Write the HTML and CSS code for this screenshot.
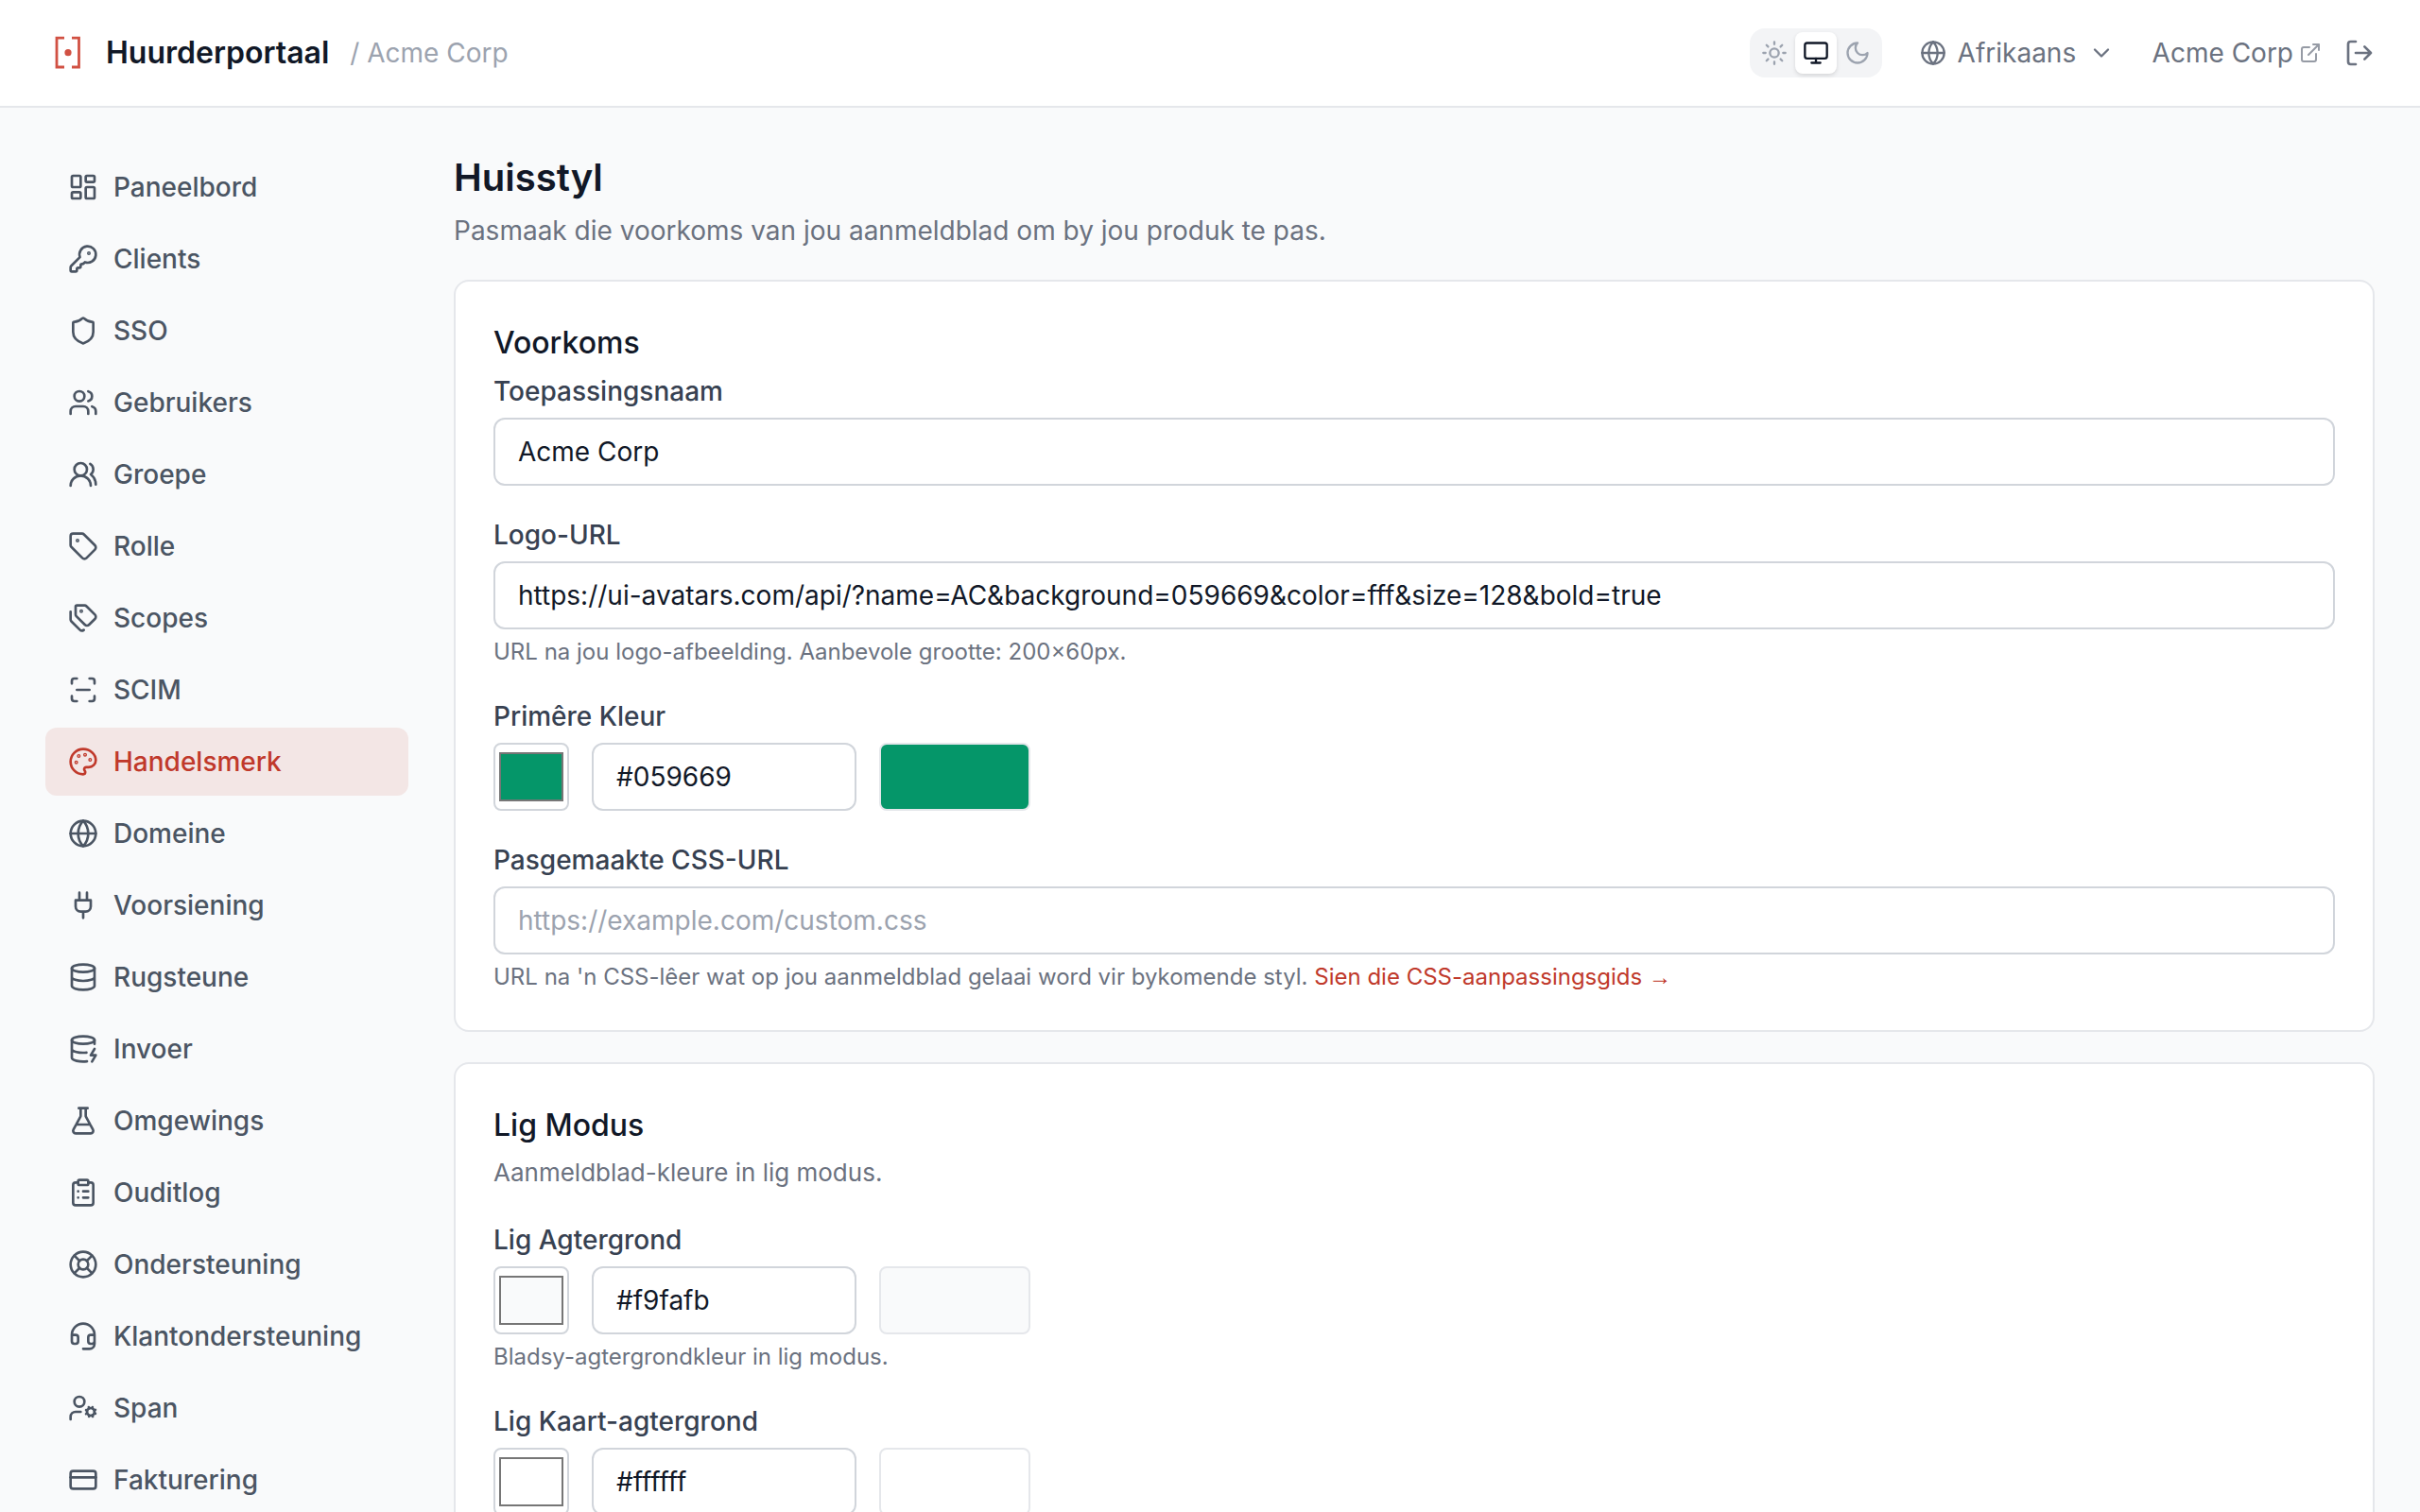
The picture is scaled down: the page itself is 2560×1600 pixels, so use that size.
FILE: index.html
```html
<!DOCTYPE html>
<html lang="af">
<head>
<meta charset="utf-8">
<meta name="viewport" content="width=device-width, initial-scale=1">
<title>Huisstyl – Huurderportaal</title>
<link rel="stylesheet" href="styles.css">
</head>
<body>
<header class="topbar">
  <div class="brand">
    <svg class="logo" viewBox="0 0 48 48" fill="none" stroke="currentColor" stroke-width="2.800" aria-hidden="true"><path d="M20 8.200H12V39H20M28 8.200H35.500V39H28"/><circle cx="24" cy="23.700" r="3.600" fill="currentColor" stroke="none"/></svg>
    <span class="brand-name">Huurderportaal</span>
    <span class="brand-org">/ Acme Corp</span>
  </div>
  <div class="tools">
    <div class="theme" role="group" aria-label="Tema">
      <button type="button" class="theme-btn" aria-label="Lig"><svg class="icon" viewBox="0 0 24 24"><circle cx="12" cy="12" r="4"/><path d="M12 2v2M12 20v2M4.930 4.930l1.410 1.410M17.660 17.660l1.410 1.410M2 12h2M20 12h2M6.340 17.660l-1.410 1.410M19.070 4.930l-1.410 1.410"/></svg></button>
      <button type="button" class="theme-btn is-active" aria-label="Stelsel" aria-pressed="true"><svg class="icon" viewBox="0 0 24 24"><rect width="20" height="14" x="2" y="3" rx="2"/><path d="M8 21h8M12 17v4"/></svg></button>
      <button type="button" class="theme-btn" aria-label="Donker"><svg class="icon" viewBox="0 0 24 24"><path d="M12 3a6 6 0 0 0 9 9 9 9 0 1 1-9-9Z"/></svg></button>
    </div>
    <div class="lang">
      <svg class="icon" viewBox="0 0 24 24" aria-hidden="true"><circle cx="12" cy="12" r="10"/><path d="M12 2a14.500 14.500 0 0 0 0 20 14.500 14.500 0 0 0 0-20M2 12h20"/></svg>
      <select class="lang-select" aria-label="Taal"><option>Afrikaans</option></select>
      <svg class="icon" viewBox="0 0 24 24" aria-hidden="true"><path d="m6 9 6 6 6-6"/></svg>
    </div>
    <div class="account">
      <a class="org-link" href="#">Acme Corp <svg class="icon icon-ext" viewBox="0 0 24 24" aria-hidden="true"><path d="M15 3h6v6M10 14 21 3M18 13v6a2 2 0 0 1-2 2H5a2 2 0 0 1-2-2V8a2 2 0 0 1 2-2h6"/></svg></a>
      <button type="button" class="logout" aria-label="Teken uit"><svg class="icon icon-nav" viewBox="0 0 24 24"><path d="m16 17 5-5-5-5M21 12H9M9 21H5a2 2 0 0 1-2-2V5a2 2 0 0 1 2-2h4"/></svg></button>
    </div>
  </div>
</header>
<div class="shell">
  <nav class="sidebar" aria-label="Hoofnavigasie">
    <a class="nav-item" href="#"><svg class="icon icon-nav" viewBox="0 0 24 24"><rect width="7" height="9" x="3" y="3" rx="1"/><rect width="7" height="5" x="14" y="3" rx="1"/><rect width="7" height="9" x="14" y="12" rx="1"/><rect width="7" height="5" x="3" y="16" rx="1"/></svg>Paneelbord</a>
    <a class="nav-item" href="#"><svg class="icon icon-nav" viewBox="0 0 24 24"><path d="M2.586 17.414A2 2 0 0 0 2 18.828V21a1 1 0 0 0 1 1h3a1 1 0 0 0 1-1v-1a1 1 0 0 1 1-1h1a1 1 0 0 0 1-1v-1a1 1 0 0 1 1-1h.172a2 2 0 0 0 1.414-.586l.814-.814a6.500 6.500 0 1 0-4-4z"/><circle cx="16.500" cy="7.500" r=".5" fill="currentColor"/></svg>Clients</a>
    <a class="nav-item" href="#"><svg class="icon icon-nav" viewBox="0 0 24 24"><path d="M20 13c0 5-3.500 7.500-7.660 8.950a1 1 0 0 1-.67-.01C7.500 20.500 4 18 4 13V6a1 1 0 0 1 1-1c2 0 4.500-1.200 6.240-2.720a1.170 1.170 0 0 1 1.520 0C14.510 3.810 17 5 19 5a1 1 0 0 1 1 1z"/></svg>SSO</a>
    <a class="nav-item" href="#"><svg class="icon icon-nav" viewBox="0 0 24 24"><path d="M16 21v-2a4 4 0 0 0-4-4H6a4 4 0 0 0-4 4v2"/><circle cx="9" cy="7" r="4"/><path d="M22 21v-2a4 4 0 0 0-3-3.870M16 3.130a4 4 0 0 1 0 7.750"/></svg>Gebruikers</a>
    <a class="nav-item" href="#"><svg class="icon icon-nav" viewBox="0 0 24 24"><path d="M18 21a8 8 0 0 0-16 0"/><circle cx="10" cy="8" r="5"/><path d="M22 20c0-3.370-2-6.500-4-8a5 5 0 0 0-.45-8.300"/></svg>Groepe</a>
    <a class="nav-item" href="#"><svg class="icon icon-nav" viewBox="0 0 24 24"><path d="M12.586 2.586A2 2 0 0 0 11.172 2H4a2 2 0 0 0-2 2v7.172a2 2 0 0 0 .586 1.414l8.704 8.704a2.426 2.426 0 0 0 3.420 0l6.580-6.580a2.426 2.426 0 0 0 0-3.420z"/><circle cx="7.500" cy="7.500" r=".5" fill="currentColor"/></svg>Rolle</a>
    <a class="nav-item" href="#"><svg class="icon icon-nav" viewBox="0 0 24 24"><path d="M13.172 2a2 2 0 0 1 1.414.586l6.710 6.710a2.400 2.400 0 0 1 0 3.408l-4.592 4.592a2.400 2.400 0 0 1-3.408 0l-6.710-6.710A2 2 0 0 1 6 9.172V3a1 1 0 0 1 1-1zM2 7v6.172a2 2 0 0 0 .586 1.414l6.710 6.710a2.400 2.400 0 0 0 3.191.193"/><circle cx="10.500" cy="6.500" r=".5" fill="currentColor"/></svg>Scopes</a>
    <a class="nav-item" href="#"><svg class="icon icon-nav" viewBox="0 0 24 24"><path d="M3 7V5a2 2 0 0 1 2-2h2M17 3h2a2 2 0 0 1 2 2v2M21 17v2a2 2 0 0 1-2 2h-2M7 21H5a2 2 0 0 1-2-2v-2M7 12h10"/></svg>SCIM</a>
    <a class="nav-item is-active" href="#" aria-current="page"><svg class="icon icon-nav" viewBox="0 0 24 24"><path d="M12 2C6.500 2 2 6.500 2 12s4.500 10 10 10c.926 0 1.648-.746 1.648-1.688 0-.437-.18-.835-.437-1.125-.29-.289-.438-.652-.438-1.125a1.640 1.640 0 0 1 1.668-1.668h1.996c3.051 0 5.555-2.503 5.555-5.554C21.965 6.012 17.461 2 12 2z"/><circle cx="13.500" cy="6.500" r=".5"/><circle cx="17.500" cy="10.500" r=".5"/><circle cx="8.500" cy="7.500" r=".5"/><circle cx="6.500" cy="12.500" r=".5"/></svg>Handelsmerk</a>
    <a class="nav-item" href="#"><svg class="icon icon-nav" viewBox="0 0 24 24"><circle cx="12" cy="12" r="10"/><path d="M12 2a14.500 14.500 0 0 0 0 20 14.500 14.500 0 0 0 0-20M2 12h20"/></svg>Domeine</a>
    <a class="nav-item" href="#"><svg class="icon icon-nav" viewBox="0 0 24 24"><path d="M12 22v-5M9 8V2M15 8V2M18 8v5a4 4 0 0 1-4 4h-4a4 4 0 0 1-4-4V8Z"/></svg>Voorsiening</a>
    <a class="nav-item" href="#"><svg class="icon icon-nav" viewBox="0 0 24 24"><ellipse cx="12" cy="5" rx="9" ry="3"/><path d="M3 5v14a9 3 0 0 0 18 0V5M3 12a9 3 0 0 0 18 0"/></svg>Rugsteune</a>
    <a class="nav-item" href="#"><svg class="icon icon-nav" viewBox="0 0 24 24"><ellipse cx="12" cy="5" rx="9" ry="3"/><path d="M3 5v14a9 3 0 0 0 12 2.840M21 5v3M21 12l-3 5h4l-3 5M3 12a9 3 0 0 0 11.590 2.870"/></svg>Invoer</a>
    <a class="nav-item" href="#"><svg class="icon icon-nav" viewBox="0 0 24 24"><path d="M14 2v6a2 2 0 0 0 .245.960l5.510 10.080A2 2 0 0 1 18 22H6a2 2 0 0 1-1.755-2.960l5.510-10.080A2 2 0 0 0 10 8V2M6.453 15h11.094M8.500 2h7"/></svg>Omgewings</a>
    <a class="nav-item" href="#"><svg class="icon icon-nav" viewBox="0 0 24 24"><rect width="8" height="4" x="8" y="2" rx="1"/><path d="M16 4h2a2 2 0 0 1 2 2v14a2 2 0 0 1-2 2H6a2 2 0 0 1-2-2V6a2 2 0 0 1 2-2h2M12 11h4M12 16h4M8 11h.01M8 16h.01"/></svg>Ouditlog</a>
    <a class="nav-item" href="#"><svg class="icon icon-nav" viewBox="0 0 24 24"><circle cx="12" cy="12" r="10"/><path d="m4.930 4.930 4.240 4.240M14.830 9.170l4.240-4.240M14.830 14.830l4.240 4.240M9.170 14.830l-4.240 4.240"/><circle cx="12" cy="12" r="4"/></svg>Ondersteuning</a>
    <a class="nav-item" href="#"><svg class="icon icon-nav" viewBox="0 0 24 24"><path d="M3 11h3a2 2 0 0 1 2 2v3a2 2 0 0 1-2 2H5a2 2 0 0 1-2-2v-5Zm0 0a9 9 0 1 1 18 0m0 0v5a2 2 0 0 1-2 2h-1a2 2 0 0 1-2-2v-3a2 2 0 0 1 2-2h3ZM21 16v2a4 4 0 0 1-4 4h-5"/></svg>Klantondersteuning</a>
    <a class="nav-item" href="#"><svg class="icon icon-nav" viewBox="0 0 24 24"><circle cx="18" cy="15" r="3"/><circle cx="9" cy="7" r="4"/><path d="M10 15H6a4 4 0 0 0-4 4v2M21.700 16.400l-.9-.3M15.200 13.900l-.9-.3M16.600 18.700l.3-.9M19.100 12.200l.3-.9M19.600 18.700l-.4-1M16.800 12.300l-.4-1M14.300 16.600l1-.4M20.700 13.800l1-.4"/></svg>Span</a>
    <a class="nav-item" href="#"><svg class="icon icon-nav" viewBox="0 0 24 24"><rect width="20" height="14" x="2" y="5" rx="2"/><path d="M2 10h20"/></svg>Fakturering</a>
  </nav>
  <main class="content">
    <div class="page-head">
      <h1 class="page-title">Huisstyl</h1>
      <p class="page-sub">Pasmaak die voorkoms van jou aanmeldblad om by jou produk te pas.</p>
    </div>
    <section class="card">
      <h2 class="card-title">Voorkoms</h2>
      <div class="fields">
        <div class="field">
          <label class="label" for="app-name">Toepassingsnaam</label>
          <input class="input" id="app-name" type="text" value="Acme Corp">
        </div>
        <div class="field">
          <label class="label" for="logo-url">Logo-URL</label>
          <input class="input" id="logo-url" type="text" value="https://ui-avatars.com/api/?name=AC&amp;background=059669&amp;color=fff&amp;size=128&amp;bold=true">
          <p class="help">URL na jou logo-afbeelding. Aanbevole grootte: 200×60px.</p>
        </div>
        <div class="field">
          <label class="label" for="primary">Primêre Kleur</label>
          <div class="color-row">
            <input class="picker" type="color" value="#059669" aria-label="Kies primêre kleur">
            <input class="input input-hex" id="primary" type="text" value="#059669">
            <div class="preview" style="background-color:#059669"></div>
          </div>
        </div>
        <div class="field">
          <label class="label" for="css-url">Pasgemaakte CSS-URL</label>
          <input class="input" id="css-url" type="text" placeholder="https://example.com/custom.css">
          <p class="help">URL na 'n CSS-lêer wat op jou aanmeldblad gelaai word vir bykomende styl. <a class="help-link" href="#">Sien die CSS-aanpassingsgids <span class="arrow">→</span></a></p>
        </div>
      </div>
    </section>
    <section class="card">
      <h2 class="card-title">Lig Modus</h2>
      <p class="card-sub">Aanmeldblad-kleure in lig modus.</p>
      <div class="fields">
        <div class="field">
          <label class="label" for="light-bg">Lig Agtergrond</label>
          <div class="color-row">
            <input class="picker" type="color" value="#f9fafb" aria-label="Kies lig agtergrond">
            <input class="input input-hex" id="light-bg" type="text" value="#f9fafb">
            <div class="preview" style="background-color:#f9fafb"></div>
          </div>
          <p class="help">Bladsy-agtergrondkleur in lig modus.</p>
        </div>
        <div class="field">
          <label class="label" for="light-card">Lig Kaart-agtergrond</label>
          <div class="color-row">
            <input class="picker" type="color" value="#ffffff" aria-label="Kies lig kaart-agtergrond">
            <input class="input input-hex" id="light-card" type="text" value="#ffffff">
            <div class="preview" style="background-color:#ffffff"></div>
          </div>
        </div>
      </div>
    </section>
  </main>
</div>
</body>
</html>
```
FILE: styles.css
```css
:root {
  --accent: #c0392b;
  --logo: #d15143;
  --ink: #111827;
  --label: #374151;
  --nav: #4b5563;
  --muted: #6b7280;
  --faint: #9ca3af;
  --line: #e5e7eb;
  --field-line: #d1d5db;
  --bg: #f9fafb;
}

* { box-sizing: border-box; }

body {
  margin: 0;
  background: var(--bg);
  color: var(--ink);
  font-family: Inter, "Liberation Sans", sans-serif;
  font-size: 28px;
  line-height: 40px;
}

h1, h2, p { margin: 0; }
a { color: inherit; text-decoration: none; }
button, input, select { font: inherit; color: inherit; }
button { border: 0; padding: 0; background: none; cursor: pointer; }

.icon {
  display: block;
  flex: none;
  width: 28px;
  height: 28px;
  fill: none;
  stroke: currentColor;
  stroke-width: 2;
  stroke-linecap: round;
  stroke-linejoin: round;
}
.icon-nav { width: 32px; height: 32px; }
.icon-ext { width: 24px; height: 24px; opacity: .7; }

.topbar {
  display: flex;
  align-items: center;
  justify-content: space-between;
  height: 114px;
  padding: 0 48px;
  background: #fff;
  border-bottom: 2px solid var(--line);
}
.brand, .tools, .account, .org-link, .lang { display: flex; align-items: center; }
.logo { width: 48px; height: 48px; margin-right: 16px; color: var(--logo); }
.brand-name { margin-right: 22px; font-size: 32px; font-weight: 600; }
.brand-org { color: var(--faint); }

.tools { gap: 40px; color: var(--muted); }
.theme { display: flex; padding: 4px; border-radius: 16px; background: #f3f4f6; }
.theme-btn {
  display: grid;
  place-items: center;
  width: 44px;
  height: 44px;
  border-radius: 8px;
  color: var(--faint);
}
.theme-btn.is-active {
  background: #fff;
  color: var(--ink);
  box-shadow: 0 2px 4px rgba(0, 0, 0, .12);
}
.lang { gap: 12px; }
.lang-select {
  appearance: none;
  border: 0;
  padding: 0;
  background: none;
}
.account { gap: 24px; }
.org-link { gap: 6px; }

.shell {
  display: grid;
  grid-template-columns: 384px minmax(0, 1fr);
  gap: 48px;
  padding: 48px;
}
.sidebar { display: flex; flex-direction: column; gap: 4px; }
.nav-item {
  display: flex;
  align-items: center;
  gap: 16px;
  padding: 16px 24px;
  border-radius: 12px;
  color: var(--nav);
  font-weight: 500;
}
.nav-item.is-active { background: rgba(192, 57, 43, .1); color: var(--accent); }

.content { display: flex; flex-direction: column; gap: 32px; }
.page-title { margin-bottom: 10px; font-size: 40px; line-height: 52px; font-weight: 600; }
.page-sub { color: var(--muted); }

.card {
  padding: 40px;
  background: #fff;
  border: 2px solid var(--line);
  border-radius: 16px;
}
.card-title { margin-bottom: 6px; font-size: 32px; line-height: 50px; font-weight: 500; }
.card-sub { margin-bottom: 32px; font-size: 26px; line-height: 38px; color: var(--muted); }

.fields { display: flex; flex-direction: column; gap: 32px; }
.field { display: flex; flex-direction: column; gap: 8px; }
.label { color: var(--label); font-weight: 500; }
.input {
  width: 100%;
  height: 72px;
  padding: 0 24px;
  border: 2px solid var(--field-line);
  border-radius: 12px;
  background: #fff;
}
.input::placeholder { color: var(--faint); opacity: 1; }
.help { font-size: 24px; line-height: 32px; color: var(--muted); }
.help-link { color: var(--accent); }
.arrow { font-family: "Liberation Sans", sans-serif; }

.color-row { display: flex; gap: 24px; }
.input-hex { width: 280px; }
.picker {
  appearance: none;
  width: 80px;
  height: 72px;
  padding: 0;
  border: 2px solid var(--field-line);
  border-radius: 8px;
  background: #fff;
}
.picker::-webkit-color-swatch-wrapper { padding: 8px 4px; }
.picker::-webkit-color-swatch { border: 2px solid #767676; border-radius: 0; }
.preview { width: 160px; height: 72px; border: 2px solid var(--line); border-radius: 8px; }
```
